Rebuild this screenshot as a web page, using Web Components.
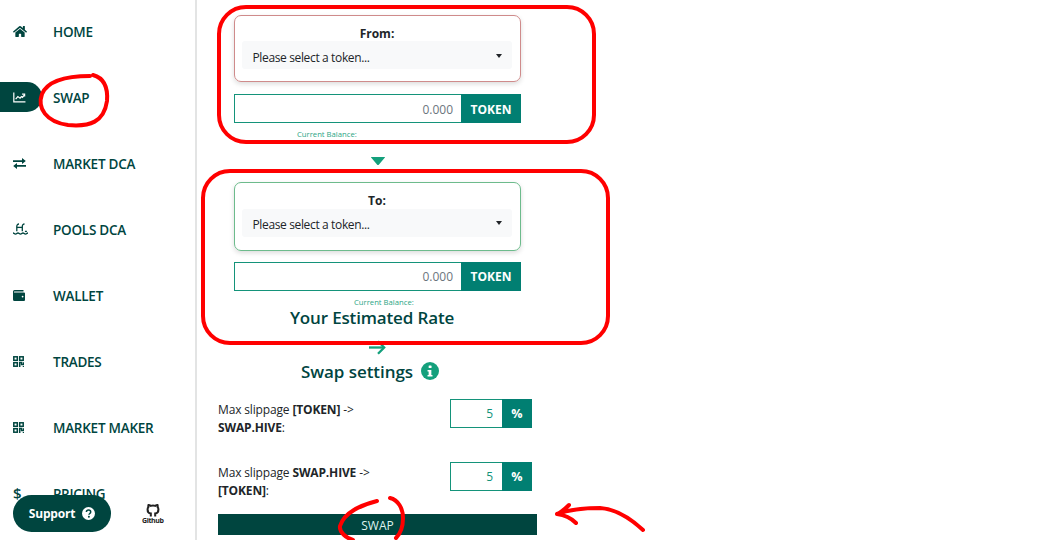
<!DOCTYPE html>
<html>
<head>
<meta charset="utf-8">
<title>Swap</title>
<style>
  html, body { margin: 0; height: 100%; overflow: hidden; background: #fff; }
  body { font-family: "Open Sans", "Noto Sans", sans-serif; color: #212529; }
  #app { display: flex; height: 540px; position: relative; }
</style>
</head>
<body>
<div id="app">
  <app-sidebar>
    <nav-item label="HOME" icon="home"></nav-item>
    <nav-item label="SWAP" icon="chart" active></nav-item>
    <nav-item label="MARKET DCA" icon="exchange"></nav-item>
    <nav-item label="POOLS DCA" icon="pool"></nav-item>
    <nav-item label="WALLET" icon="wallet"></nav-item>
    <nav-item label="TRADES" icon="qr"></nav-item>
    <nav-item label="MARKET MAKER" icon="qr"></nav-item>
    <nav-item label="PRICING" icon="dollar"></nav-item>
  </app-sidebar>
  <swap-form>
    <token-picker title="From:" tone="from"></token-picker>
    <flow-arrow></flow-arrow>
    <token-picker title="To:" tone="to"></token-picker>
    <estimated-rate></estimated-rate>
    <swap-settings></swap-settings>
  </swap-form>
  <red-marks></red-marks>
</div>

<script>
const ICONS = {
  home: `<svg viewBox="0 0 576 512" width="14" height="13"><path fill="currentColor" d="M280.37 148.26L96 300.11V464a16 16 0 0 0 16 16l112.06-.29a16 16 0 0 0 15.92-16V368a16 16 0 0 1 16-16h64a16 16 0 0 1 16 16v95.64a16 16 0 0 0 16 16.05L464 480a16 16 0 0 0 16-16V300L295.67 148.26a12.19 12.19 0 0 0-15.3 0zM571.6 251.47L488 182.56V44.05a12 12 0 0 0-12-12h-56a12 12 0 0 0-12 12v72.61L318.47 43a48 48 0 0 0-61 0L4.34 251.47a12 12 0 0 0-1.6 16.9l25.5 31A12 12 0 0 0 45.15 301l235.22-193.74a12.19 12.19 0 0 1 15.3 0L530.9 301a12 12 0 0 0 16.9-1.6l25.5-31a12 12 0 0 0-1.7-16.93z"/></svg>`,
  chart: `<svg viewBox="0 0 14 12" width="13" height="11" fill="none" stroke="currentColor" stroke-width="1.3"><path d="M.8 .5v10.2H13.500"/><path d="M2.800 7.800l2.400-2.800 2.400 1.700 1.500-1.700 1.200 .9 2-2.700"/><path d="M9.800 2.400h2.800v2.600"/></svg>`,
  exchange: `<svg viewBox="0 0 13 11" width="13" height="11"><path fill="currentColor" d="M0 2.200h9V0l3.800 3.100L9 6.100V4H0zM13 7H4V4.900L.2 8 4 11V8.800h9z"/></svg>`,
  pool: `<svg viewBox="0 0 15 12" width="15" height="12" fill="none" stroke="currentColor" stroke-width="1.300"><path d="M3.800 8.200V3.600C3.800 1.800 4.700 1 6 1"/><path d="M9.300 8.200V3.600c0-1.800 .9-2.600 2.200-2.600"/><path d="M3.800 4.400h5.500"/><path d="M0 10c1.200 0 1.200 1.100 2.500 1.100S3.800 10 5 10s1.200 1.100 2.500 1.100S8.800 10 10 10s1.200 1.100 2.500 1.100S13.800 10 15 10"/><path d="M11.900 8.400h2"/></svg>`,
  wallet: `<svg viewBox="0 0 12 11" width="12" height="11"><path fill="currentColor" fill-rule="evenodd" d="M1.500 0H10.500v1.600H1.400a.5.5 0 0 0 0 1H11a1 1 0 0 1 1 1V10a1 1 0 0 1-1 1H1.500A1.500 1.500 0 0 1 0 9.500v-8A1.500 1.500 0 0 1 1.500 0zM9.600 5.700a.9.9 0 1 0 0 1.800.9.9 0 0 0 0-1.800z"/></svg>`,
  qr: `<svg viewBox="0 0 11 11" width="11" height="11" fill="none" stroke="currentColor" stroke-width="1.500"><rect x=".8" y=".8" width="3.500" height="3.500"/><rect x="6.700" y=".8" width="3.500" height="3.500"/><rect x=".8" y="6.700" width="3.500" height="3.500"/><path d="M6.700 11V6.500h1.900v1.900h2V6.200M10.500 11v-1"/></svg>`,
  dollar: `<span style="font-size:15px;font-weight:600;line-height:1">$</span>`
};

class AppSidebar extends HTMLElement {
  constructor() {
    super();
    this.attachShadow({ mode: "open" }).innerHTML = `
      <style>
        :host { display: block; flex: 0 0 195px; height: 540px; border-right: 2px solid #e3e4e4; position: relative; overflow: hidden; background: #fff; }
        .list { display: flex; flex-direction: column; gap: 32px; padding-top: 14px; }
        .foot { position: absolute; left: 13px; bottom: 8px; display: flex; align-items: center; gap: 31px; }
        .support { display: flex; align-items: center; justify-content: center; gap: 7px; width: 98px; height: 37px; border-radius: 19px; background: #00453f; color: #fff; font-size: 12px; letter-spacing: -.2px; font-weight: 700; }
        .gh { display: flex; flex-direction: column; align-items: center; font-size: 7px; font-weight: 700; color: #222; line-height: 7px; letter-spacing: -.4px; }
      </style>
      <div class="list"><slot></slot></div>
      <div class="foot">
        <div class="support">Support
          <svg width="13" height="13" viewBox="0 0 13 13"><circle cx="6.500" cy="6.500" r="6.500" fill="#fff"/><path d="M4.400 5.100c0-1.300 1-2 2.200-2 1.200 0 2.100 .8 2.100 1.800 0 1.600-1.700 1.500-1.700 2.800" fill="none" stroke="#00453f" stroke-width="1.500"/><circle cx="6.900" cy="9.800" r="1" fill="#00453f"/></svg>
        </div>
        <div class="gh">
          <svg width="14" height="14" viewBox="0 0 16 16" fill="none" stroke="#222" stroke-width="2.300"><path d="M5.500 15.500v-3.500C3 11.700 1.800 10 1.800 7.300c0-1 .3-1.900 .9-2.600-.2-.8-.1-1.700 .2-2.500 1 0 1.800 .5 2.600 1.100a9 9 0 0 1 5 0c.8-.6 1.600-1.100 2.600-1.100 .3 .8 .4 1.700 .2 2.500 .6 .7 .9 1.600 .9 2.600 0 2.700-1.200 4.400-3.700 4.700v3.500"/></svg>
          <span>Github</span>
        </div>
      </div>`;
  }
}

class NavItem extends HTMLElement {
  constructor() {
    super();
    this.attachShadow({ mode: "open" }).innerHTML = `
      <style>
        :host { display: flex; align-items: center; height: 34px; color: #00453f; font-size: 13.5px; font-weight: 600; letter-spacing: -.25px; }
        .ic { flex: 0 0 42px; height: 30px; margin-right: 11px; display: flex; align-items: center; padding-left: 13px; box-sizing: border-box; border-radius: 0 15px 15px 0; }
        .txt { padding-top: 2px; }
        :host([active]) .ic { background: #00453f; color: #fff; }
      </style>
      <span class="ic"></span><span class="txt"></span>`;
  }
  connectedCallback() {
    const root = this.shadowRoot;
    root.querySelector(".ic").innerHTML = ICONS[this.getAttribute("icon")] || "";
    root.querySelector(".txt").textContent = this.getAttribute("label");
  }
}

class SwapForm extends HTMLElement {
  constructor() {
    super();
    this.attachShadow({ mode: "open" }).innerHTML = `
      <style>
        :host { display: flex; flex-direction: column; width: 319px; margin-left: 21px; padding-top: 15px; }
      </style>
      <slot></slot>`;
  }
}

class TokenPicker extends HTMLElement {
  constructor() {
    super();
    this.attachShadow({ mode: "open" }).innerHTML = `
      <style>
        :host { display: flex; flex-direction: column; width: 287px; margin-left: 16px; }
        .card { box-sizing: border-box; border: 1px solid #cf8b8b; border-radius: 7px; padding: 10px 8px 0 7px; box-shadow: 0 2px 5px rgba(0,0,0,.14); height: 67px; }
        :host([tone="to"]) .card { border-color: #6dbb8c; height: 69px; }
        .title { text-align: center; font-size: 12px; font-weight: 700; line-height: 15px; }
        :host([tone="to"]) .title { line-height: 16px; }
        .select { display: flex; justify-content: space-between; box-sizing: border-box; height: 28px; padding: 9px 10px 0 10.5px; background: #f8f9fa; border-radius: 3px; font-size: 12px; line-height: 16px; letter-spacing: -.36px; }
        :host([tone="to"]) .select { padding-top: 8px; }
        .caret { width: 0; height: 0; border: 3px solid transparent; border-top: 4px solid #212529; border-bottom: 0; margin-top: 4px; }
        .row { display: flex; height: 29px; margin-top: 12px; }
        :host([tone="to"]) .row { margin-top: 11px; }
        .amount { flex: 1; box-sizing: border-box; border: 1px solid #14937a; border-right: 0; text-align: right; padding: 0 8px; font-size: 12px; line-height: 29px; color: #6c757d; }
        .unit { flex: 0 0 60px; background: #017f72; color: #fff; font-size: 12px; font-weight: 700; text-align: center; line-height: 31px; }
        :host([tone="to"]) .amount { line-height: 28px; }
        :host([tone="to"]) .unit { line-height: 30px; }
        .bal { font-size: 7.7px; line-height: 10px; color: #2ba585; margin-top: 6px; margin-left: 63px; }
        :host([tone="to"]) .bal { margin-left: 120px; }
      </style>
      <div class="card">
        <div class="title"></div>
        <div class="select"><span>Please select a token...</span><span class="caret"></span></div>
      </div>
      <div class="row"><div class="amount">0.000</div><div class="unit">TOKEN</div></div>
      <div class="bal">Current Balance:</div>`;
  }
  connectedCallback() {
    this.shadowRoot.querySelector(".title").textContent = this.getAttribute("title");
  }
}

class FlowArrow extends HTMLElement {
  constructor() {
    super();
    this.attachShadow({ mode: "open" }).innerHTML = `
      <style>
        :host { display: flex; justify-content: center; width: 319px; height: 43px; align-items: flex-start; padding-top: 18px; box-sizing: border-box; }
        svg { display: block; }
      </style>
      <svg width="14" height="8" viewBox="0 0 14 8"><path d="M.3 0h13.400c.3 0 .4 .3 .2 .5L8 7.400a1.300 1.300 0 0 1-2 0L.1 .5C-.1 .3 0 0 .3 0z" fill="#14a07c"/></svg>`;
  }
}

class EstimatedRate extends HTMLElement {
  constructor() {
    super();
    this.attachShadow({ mode: "open" }).innerHTML = `
      <style>
        :host { display: block; width: 319px; }
        h3 { margin: 0; padding-right: 11px; text-align: center; font-size: 17px; line-height: 22px; font-weight: 600; letter-spacing: -.15px; color: #00453f; }
        .arr { display: flex; justify-content: center; height: 30px; padding-top: 11px; box-sizing: border-box; }
        svg { display: block; }
      </style>
      <h3>Your Estimated Rate</h3>
      <div class="arr"><svg width="17" height="15" viewBox="0 0 17 15" fill="none" stroke="#14a07c" stroke-width="2.300"><path d="M0 7.500h15"/><path d="M9 1.200l6.200 6.300-6.200 6.300"/></svg></div>`;
  }
}

class SwapSettings extends HTMLElement {
  constructor() {
    super();
    this.attachShadow({ mode: "open" }).innerHTML = `
      <style>
        :host { display: block; width: 319px; }
        .head { display: flex; justify-content: center; align-items: center; gap: 8px; height: 24px; padding-right: 15px; font-size: 17px; font-weight: 600; letter-spacing: -.05px; color: #00453f; }
        .row { display: flex; height: 50px; }
        .row + .row { margin-top: 13px; }
        .rows { margin-top: 16px; }
        .lbl { width: 232px; box-sizing: border-box; font-size: 12px; line-height: 17.5px; padding-top: 2px; letter-spacing: -.15px; }
        .lbl b { font-weight: 700; }
        .pct { display: flex; width: 82px; height: 29px; }
        .val { flex: 1; box-sizing: border-box; border: 1px solid #14937a; border-right: 0; text-align: right; padding-right: 9px; font-size: 12px; line-height: 27px; color: #14937a; }
        .sign { flex: 0 0 30px; background: #017f72; color: #fff; font-size: 12.5px; font-weight: 700; text-align: center; line-height: 29px; }
        .btn { height: 21px; background: #00453f; color: #dff3ee; font-size: 12px; line-height: 23px; text-align: center; margin-top: 2px; }
      </style>
      <div class="head"><span>Swap settings</span>
        <svg width="18" height="18" viewBox="0 0 16 16"><circle cx="8" cy="8" r="8" fill="#14a07c"/><rect x="6.800" y="3" width="2.600" height="2.400" rx=".6" fill="#fff"/><path d="M5.800 7h3.400v4.500h1v1.400H5.800v-1.400h1V8.400h-1z" fill="#fff"/></svg>
      </div>
      <div class="rows">
        <div class="row"><div class="lbl">Max slippage <b>[TOKEN]</b> -&gt;<br><b>SWAP.HIVE</b>:</div><div class="pct"><div class="val">5</div><div class="sign">%</div></div></div>
        <div class="row"><div class="lbl">Max slippage <b>SWAP.HIVE</b> -&gt;<br><b>[TOKEN]</b>:</div><div class="pct"><div class="val">5</div><div class="sign">%</div></div></div>
      </div>
      <div class="btn">SWAP</div>`;
  }
}

// the red pen notes sit on top of the screenshot
class RedMarks extends HTMLElement {
  constructor() {
    super();
    this.attachShadow({ mode: "open" }).innerHTML = `
      <style>
        :host { position: absolute; inset: 0; pointer-events: none; }
        svg { display: block; }
        .pen { fill: none; stroke: #f00; stroke-width: 4; stroke-linecap: round; stroke-linejoin: round; }
      </style>
      <svg width="1057" height="540" viewBox="0 0 1057 540">
        <rect class="pen" x="219" y="7" width="375" height="135" rx="27"/>
        <rect class="pen" x="203" y="171" width="405" height="172" rx="27"/>
        <path class="pen" d="M90 76C68 76 48 80 42 94c-5 14 4 28 26 31 22 2 36-3 39-24 1-13-3-23-14-26"/>
        <path class="pen" d="M377 501c-16 4-33 12-37 25-1 6 6 12 13 14M390 498c8 2 13 10 13 20 0 8-3 16-7 20"/>
        <path class="pen" d="M557 514c14-5 28-6 43-6 16 1 30 10 43 22M557 514c5-2 9-6 12-9M557 514c8 1 15 5 19 9"/>
      </svg>`;
  }
}

customElements.define("app-sidebar", AppSidebar);
customElements.define("nav-item", NavItem);
customElements.define("swap-form", SwapForm);
customElements.define("token-picker", TokenPicker);
customElements.define("flow-arrow", FlowArrow);
customElements.define("estimated-rate", EstimatedRate);
customElements.define("swap-settings", SwapSettings);
customElements.define("red-marks", RedMarks);
</script>
</body>
</html>
